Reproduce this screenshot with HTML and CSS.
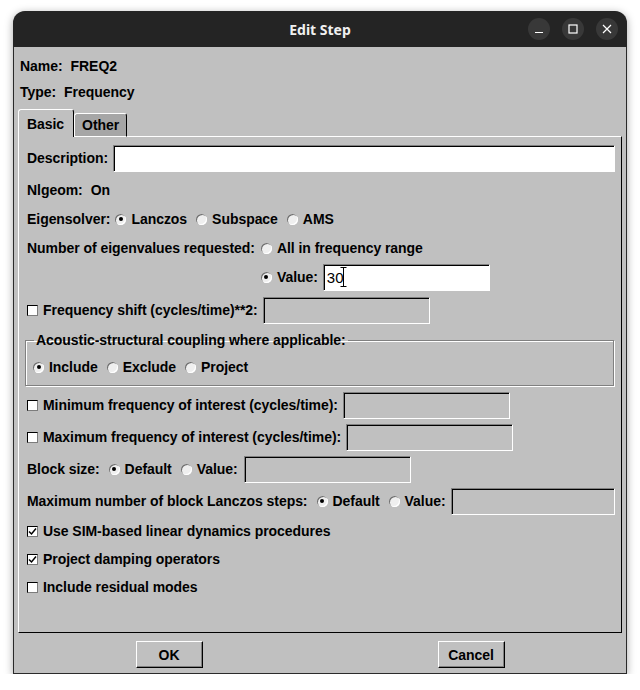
FILE: index.html
```html
<!DOCTYPE html>
<html>
<head>
<meta charset="utf-8">
<title>Edit Step</title>
<link rel="stylesheet" href="styles.css">
</head>
<body>
<div class="window">
  <div class="titlebar">
    <span></span>
    <span class="title">Edit Step</span>
    <div class="controls">
      <span class="wbtn"><svg width="10" height="10" viewBox="0 0 10 10"><path d="M1 8.5H9" stroke="#fff" stroke-width="1.2"/></svg></span>
      <span class="wbtn"><svg width="10" height="10" viewBox="0 0 10 10"><rect x="1" y="1" width="8" height="8" fill="none" stroke="#fff" stroke-width="1.2"/></svg></span>
      <span class="wbtn"><svg width="10" height="10" viewBox="0 0 10 10"><path d="M1 1L9 9M9 1L1 9" stroke="#fff" stroke-width="1.2"/></svg></span>
    </div>
  </div>
  <div class="content">
    <div class="info"><span class="key">Name:</span>FREQ2</div>
    <div class="info"><span class="key">Type:</span>Frequency</div>
    <div class="tabs">
      <div class="tab active">Basic</div>
      <div class="tab">Other</div>
      <div class="tabfill"></div>
    </div>
    <div class="panel">
      <div class="row r-desc">
        <span>Description:</span>
        <span class="field white grow"></span>
      </div>
      <div class="row r-nl"><span class="key">Nlgeom:</span>On</div>
      <div class="row r-eig">
        <span>Eigensolver:</span>
        <span class="opt"><span class="radio on"></span>Lanczos</span>
        <span class="opt"><span class="radio"></span>Subspace</span>
        <span class="opt"><span class="radio"></span>AMS</span>
      </div>
      <div class="numgrid">
        <span class="row">Number of eigenvalues requested:</span>
        <span class="row"><span class="opt"><span class="radio"></span>All in frequency range</span></span>
        <span class="row col2"><span class="opt"><span class="radio on"></span>Value:</span><span class="field white small"><span class="val">30</span><svg class="ibeam" width="7" height="20" viewBox="0 0 7 20"><path d="M0.5 0.5H6.5M3.5 0.5V19.5M0.5 19.5H6.5" stroke="#000" stroke-width="1" fill="none"/></svg></span></span>
      </div>
      <div class="row r-fs">
        <span class="opt"><span class="check"></span>Frequency shift (cycles/time)**2:</span>
        <span class="field small"></span>
      </div>
      <fieldset class="group">
        <legend>Acoustic-structural coupling where applicable:</legend>
        <div class="row r-grp">
          <span class="opt"><span class="radio on"></span>Include</span>
          <span class="opt"><span class="radio"></span>Exclude</span>
          <span class="opt"><span class="radio"></span>Project</span>
        </div>
      </fieldset>
      <div class="row r-min">
        <span class="opt"><span class="check"></span>Minimum frequency of interest (cycles/time):</span>
        <span class="field small"></span>
      </div>
      <div class="row r-max">
        <span class="opt"><span class="check"></span>Maximum frequency of interest (cycles/time):</span>
        <span class="field small"></span>
      </div>
      <div class="row r-blk">
        <span>Block size:</span>
        <span class="opt"><span class="radio on"></span>Default</span>
        <span class="opt"><span class="radio"></span>Value:</span>
        <span class="field small"></span>
      </div>
      <div class="row r-lz">
        <span>Maximum number of block Lanczos steps:</span>
        <span class="opt"><span class="radio on"></span>Default</span>
        <span class="opt"><span class="radio"></span>Value:</span>
        <span class="field grow"></span>
      </div>
      <div class="row r-sim"><span class="opt"><span class="check on"><svg width="9" height="9" viewBox="0 0 9 9"><path d="M1 4.5L3.5 7L8 1.5" stroke="#000" stroke-width="1.5" fill="none"/></svg></span>Use SIM-based linear dynamics procedures</span></div>
      <div class="row"><span class="opt"><span class="check on"><svg width="9" height="9" viewBox="0 0 9 9"><path d="M1 4.5L3.5 7L8 1.5" stroke="#000" stroke-width="1.5" fill="none"/></svg></span>Project damping operators</span></div>
      <div class="row"><span class="opt"><span class="check"></span>Include residual modes</span></div>
    </div>
    <div class="buttons">
      <span class="btn">OK</span>
      <span class="btn">Cancel</span>
    </div>
  </div>
</div>
</body>
</html>
```

FILE: styles.css
```css
html, body {
  margin: 0;
  padding: 0;
  background: #ffffff;
}
body {
  padding: 11px 0 0 13px;
  font-family: "Liberation Sans", Arial, sans-serif;
  font-size: 14px;
  font-weight: bold;
  letter-spacing: -0.05px;
  color: #000;
}
.window {
  width: 614px;
  box-sizing: border-box;
  border-radius: 12px 12px 0 0;
  background: #c0c0c0;
  box-shadow: 0 2px 8px rgba(0,0,0,0.35);
  overflow: hidden;
}
.titlebar {
  height: 36px;
  background: #242424;
  display: grid;
  grid-template-columns: 1fr auto 1fr;
  align-items: center;
}
.title {
  font-family: "Noto Sans", "DejaVu Sans", sans-serif;
  font-weight: bold;
  font-size: 14px;
  letter-spacing: 0;
  color: #f0f0f0;
}
.controls {
  justify-self: end;
  display: flex;
  gap: 12px;
  padding-right: 9px;
}
.wbtn {
  width: 22px;
  height: 22px;
  border-radius: 50%;
  background: #383838;
  display: flex;
  align-items: center;
  justify-content: center;
}
.content {
  border: 1px solid #2a2a2a;
  border-top: none;
  padding: 6px 4px 0 4px;
}
.info {
  height: 26px;
  display: flex;
  align-items: center;
  padding-left: 2px;
}
.key { margin-right: 8px; }
.tabs {
  margin-top: 4px;
  height: 28px;
  display: flex;
  align-items: flex-end;
}
.tab {
  box-sizing: border-box;
  display: flex;
  align-items: center;
  border-left: 1px solid #fff;
  border-top: 1px solid #fff;
  border-right: 1px solid #000;
  border-radius: 3px 3px 0 0;
}
.tab.active {
  height: 28px;
  padding: 0 9px 0 8px;
  background: #c0c0c0;
}
.tab:not(.active) {
  height: 24px;
  padding: 0 7px 0 7px;
  background: #a6a6a6;
  border-bottom: 1px solid #fff;
}
.tabfill {
  flex: 1;
  border-bottom: 1px solid #fff;
  border-right: 1px solid #000;
}
.panel {
  border-left: 1px solid #fff;
  border-right: 1px solid #000;
  border-bottom: 1px solid #000;
  padding: 7px 6px 31px 8px;
}
.row {
  height: 28px;
  display: flex;
  align-items: center;
  gap: 5px;
  white-space: nowrap;
}
.r-nl { margin-top: 4px; }
.r-nl .key { margin-right: 3px; }
.r-eig { margin-top: 1px; }
.r-eig .opt + .opt { margin-left: 4px; }
.numgrid {
  margin-top: 1px;
  display: grid;
  grid-template-columns: auto 1fr;
  column-gap: 6px;
  row-gap: 1px;
}
.col2 { grid-column: 2; }
.r-fs { margin-top: 5px; }
.r-min { margin-top: 5px; }
.r-max, .r-blk, .r-lz { margin-top: 4px; }
.r-sim { margin-top: 2px; }
.r-blk .opt, .r-lz .opt { margin-left: 4px; }
.r-blk .field { margin-left: 1px; }
.opt {
  display: inline-flex;
  align-items: center;
  gap: 5px;
}
.radio {
  width: 11px;
  height: 11px;
  box-sizing: border-box;
  border-radius: 50%;
  background: #efefef;
  box-shadow: inset 1px 1px 0 #6e6e6e, inset -1px -1px 0 #ffffff;
  display: inline-flex;
  align-items: center;
  justify-content: center;
}
.radio.on::after {
  content: "";
  width: 4px;
  height: 4px;
  border-radius: 50%;
  background: #000;
}
.check {
  width: 11px;
  height: 11px;
  box-sizing: border-box;
  background: #fff;
  border: 1px solid;
  border-color: #000 #7c7c7c #7c7c7c #000;
  display: inline-flex;
  align-items: center;
  justify-content: center;
}
.field {
  height: 27px;
  box-sizing: border-box;
  border: 1px solid;
  border-color: #808080 #ffffff #ffffff #808080;
  box-shadow: inset 1px 1px 0 #000;
  background: #c0c0c0;
  display: inline-flex;
  align-items: center;
  padding-left: 3px;
  font-weight: normal;
}
.field.white { background: #fff; }
.field.small { width: 167px; }
.field.grow { flex: 1; }
.val {
  font-family: "Liberation Sans", Arial, sans-serif;
  font-size: 15px;
  font-weight: normal;
}
.ibeam { margin-left: -3px; }
.group {
  margin: 8px 1px 0 -2px;
  padding: 0 8px 4px 8px;
  border: 1px solid #808080;
  box-shadow: inset 1px 1px 0 #fff, 1px 1px 0 #fff;
}
.group legend {
  padding: 0 2px;
  line-height: 16px;
}
.r-grp { margin-top: 5px; margin-left: -1px; }
.r-grp .opt + .opt { margin-left: 4px; }
.buttons {
  display: grid;
  grid-template-columns: 1fr 1fr;
  justify-items: center;
  padding: 8px 0 5px;
}
.btn {
  width: 67px;
  height: 27px;
  box-sizing: border-box;
  border: 1px solid;
  border-color: #fff #000 #000 #fff;
  box-shadow: inset -1px -1px 0 #808080;
  display: flex;
  align-items: center;
  justify-content: center;
}
```
